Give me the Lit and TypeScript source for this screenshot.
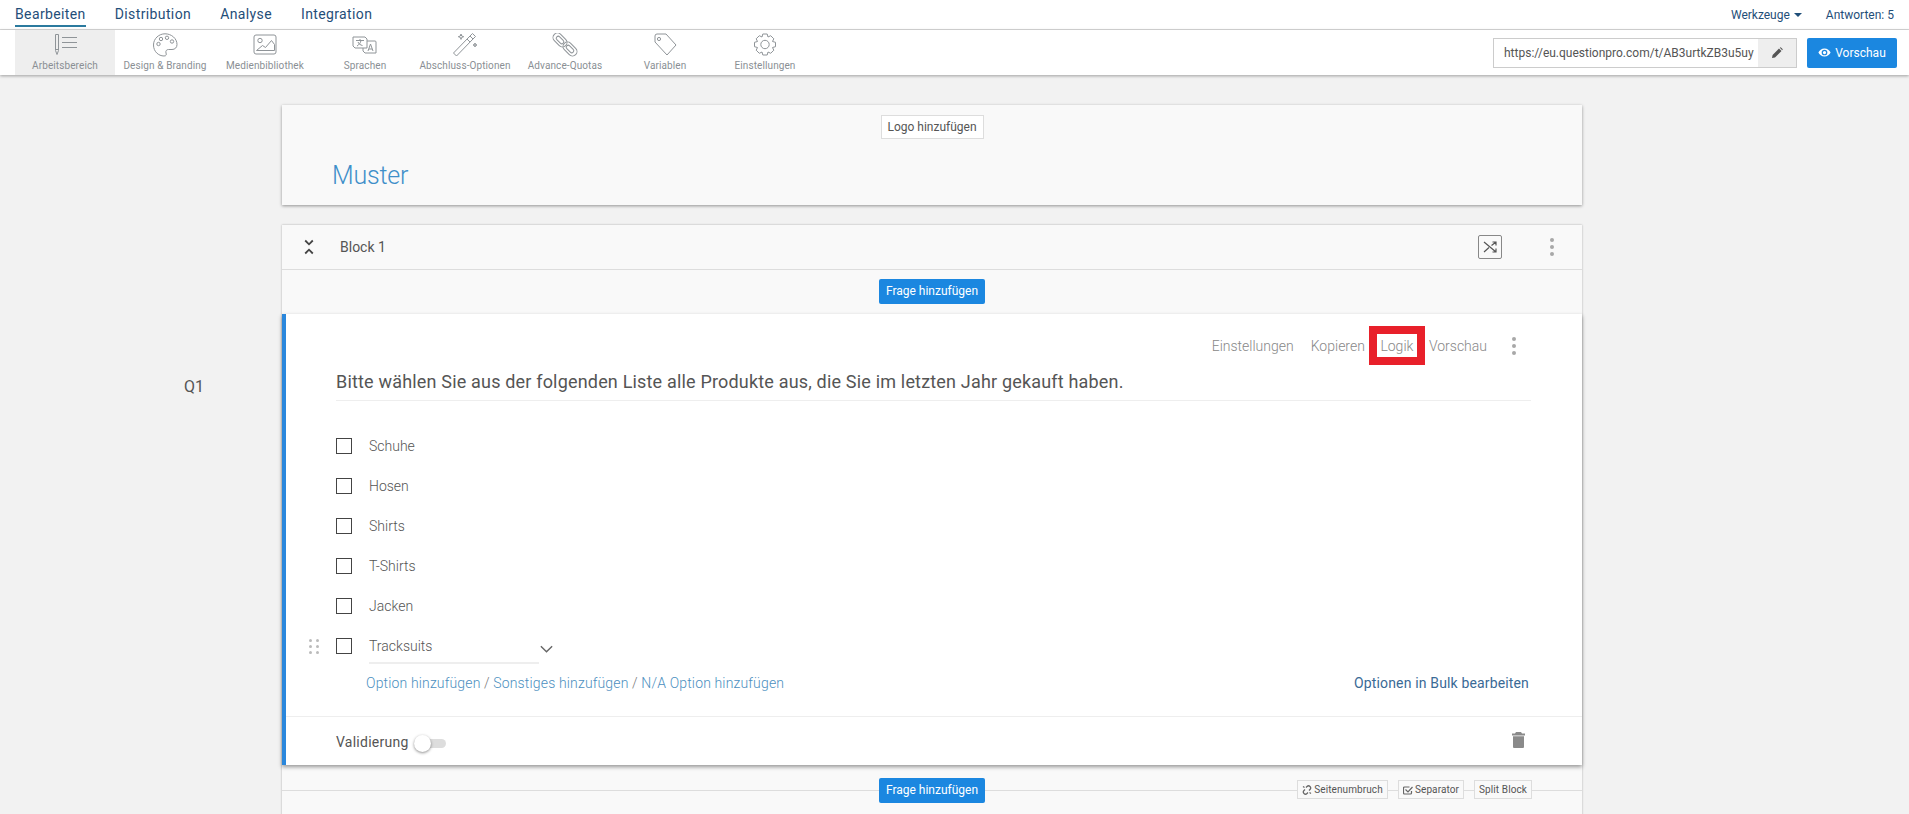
import { LitElement, html, css, svg } from "lit";
import { customElement } from "lit/decorators.js";

const tabs: [string, any][] = [
  ["Arbeitsbereich", svg`<path d="M6.500 1.500h3v16l-1.500 4-1.500-4z M6.500 16.500h3"/><path d="M13 4.500h15M13 9.500h15M13 14.500h15"/>`],
  ["Design & Branding", svg`<path d="M16 .8C10 .8 4.500 5.500 4.500 12c0 6.500 5 11 10.500 11 2.500 0 2.500-1.500 2-3-.6-2 .5-3.500 2.500-3.500h3.500c3 0 5-2 5-5C28 5.500 22.500.8 16 .8z"/><circle cx="9.500" cy="11" r="1.700"/><circle cx="12" cy="6" r="1.700"/><circle cx="18" cy="4.800" r="1.700"/><circle cx="23" cy="8.500" r="1.700"/>`],
  ["Medienbibliothek", svg`<rect x="5" y="2" width="22" height="19" rx="2"/><circle cx="11" cy="7.500" r="2.200"/><path d="M7.500 17.500l6-5 3 2 6-7 3 4v6z"/>`],
  ["Sprachen", svg`<path d="M4 4h12l2 2v9H6l-2-2z"/><path d="M18 8h8a1 1 0 0 1 1 1v11H16l-2-2v-3"/><path d="M7 7.500h8M11 6v1.500M8 13c2-1 3.500-3 4-5.500M9 9c.8 2 2.300 3 4.500 3.500"/><path d="M19 18l2.500-7 2.500 7M20 16h3"/>`],
  ["Abschluss-Optionen", svg`<path d="M4.500 20l3 3L24 6l-3-3z"/><path d="M18 6l3 3"/><path d="M21 3l2.500-2.500 3 3L24 6"/><path d="M12 1l.7 2 2 .7-2 .7-.7 2-.7-2-2-.7 2-.7zM26 10l.5 1.500 1.500.5-1.500.5-.5 1.500-.5-1.500-1.500-.5 1.500-.5z"/>`],
  ["Advance-Quotas", svg`<g transform="rotate(45 11 7)"><rect x="3" y="2.500" width="16" height="9" rx="4.500"/><rect x="6.500" y="5" width="9" height="4" rx="2"/></g><g transform="rotate(45 21 16)"><rect x="13" y="11.500" width="16" height="9" rx="4.500"/><rect x="16.500" y="14" width="9" height="4" rx="2"/></g>`],
  ["Variablen", svg`<path d="M6 3a2 2 0 0 1 2-2h9l10 11-9 10L6 9z"/><circle cx="10" cy="6" r="1.600"/>`],
  ["Einstellungen", svg`<circle cx="16" cy="11.500" r="4.200"/><path d="M13.800 1h4.400l.8 3 2.700-1.300 3.100 3.100-1.300 2.700 3 .8v4.400l-3 .8 1.300 2.700-3.100 3.100-2.700-1.300-.8 3h-4.400l-.8-3-2.700 1.300-3.100-3.100 1.300-2.700-3-.8V9.300l3-.8-1.300-2.700 3.100-3.100L13 4z"/>`],
];

const options = ["Schuhe", "Hosen", "Shirts", "T-Shirts", "Jacken", "Tracksuits"];

@customElement("app-root")
export class AppRoot extends LitElement {
  static styles = css`
    :host { display: block; height: 814px; overflow: hidden; background: #f2f2f2; font-family: "Roboto", "Noto Sans", sans-serif; color: #555; }
    .nav { height: 29px; background: #fff; border-bottom: 1px solid #d9d9d9; display: flex; align-items: center; justify-content: space-between; padding: 0 15px; }
    .links { display: flex; gap: 29px; height: 100%; }
    .links a { color: #1f4e79; font-size: 14px; letter-spacing: .38px; line-height: 28px; height: 26px; }
    .links a.on { border-bottom: 2px solid #2b7a9e; height: 25px; }
    .right { display: flex; gap: 24px; font-size: 12px; color: #1f4e79; }
    .caret { display: inline-block; border: 4px solid transparent; border-top-color: #1f4e79; border-bottom: 0; margin-left: 4px; vertical-align: 2px; }
    .bar { height: 45px; background: #fff; box-shadow: 0 1px 3px rgba(0,0,0,.35); display: flex; padding-left: 15px; position: relative; }
    .tab { width: 100px; display: flex; flex-direction: column; align-items: center; box-sizing: border-box; padding-top: 3px; font-size: 10px; letter-spacing: .1px; color: #8a8f94; white-space: nowrap; }
    .tab.on { background: #eee; }
    .tab svg { width: 32px; height: 26px; fill: none; stroke: #8f9498; stroke-width: 1; display: block; }
    .tab span { line-height: 12px; margin-top: 1px; }
    .tools { margin-left: auto; display: flex; align-items: center; gap: 10px; padding-right: 12px; }
    .url { width: 304px; height: 30px; box-sizing: border-box; border: 1px solid #ccc; display: flex; font-size: 12px; color: #555; background: #fff; }
    .url span { flex: 1; line-height: 28px; padding-left: 10px; overflow: hidden; white-space: nowrap; }
    .url i { width: 38px; background: #eee; display: flex; align-items: center; justify-content: center; }
    .url svg { width: 12px; height: 12px; fill: #555; }
    .btn { background: #1b87e0; color: #fff; border-radius: 2px; }
    .prev { width: 90px; height: 30px; font-size: 12px; display: flex; align-items: center; justify-content: center; gap: 4px; }
    .prev svg { width: 13px; height: 13px; fill: #fff; }
    .main { display: flex; flex-direction: column; width: 1300px; margin-left: 282px; position: relative; }
    .head { height: 100px; margin-top: 30px; background: #f9f9f9; box-shadow: 0 1px 3px rgba(0,0,0,.4); display: flex; flex-direction: column; align-items: center; }
    .logo { margin-top: 10px; width: 103px; height: 24px; box-sizing: border-box; background: #fff; border: 1px solid #ddd; font-size: 12px; color: #555; text-align: center; line-height: 22px; white-space: nowrap; }
    .title { align-self: flex-start; margin: 22px 0 0 50px; font-size: 25px; letter-spacing: -.2px; font-weight: 300; line-height: 30px; color: #3f8fc9; }
    .block { margin-top: 20px; background: #f9f9f9; box-shadow: 0 0 2px rgba(0,0,0,.3); }
    .bh { height: 45px; box-sizing: border-box; border-bottom: 1px solid #ddd; display: flex; align-items: center; padding-left: 21px; font-size: 14px; color: #555; }
    .bh .col { width: 12px; height: 16px; margin-right: 25px; }
    .bh .col svg, .sm svg { display: block; }
    .shuf { width: 24px; height: 24px; border: 1px solid #888; border-radius: 2px; box-sizing: border-box; margin-left: auto; display: flex; align-items: center; justify-content: center; }
    .dots { display: flex; flex-direction: column; gap: 3px; width: 4px; }
    .dots b { width: 4px; height: 4px; border-radius: 50%; background: #a8a8a8; }
    .bh .dots { margin: 0 28px 0 48px; }
    .add { height: 44px; box-sizing: border-box; padding-bottom: 2px; display: flex; align-items: center; justify-content: center; }
    .fh { width: 106px; height: 25px; font-size: 12px; text-align: center; line-height: 25px; white-space: nowrap; }
    .q { height: 451px; background: #fff; border-left: 4px solid #2a87dc; box-shadow: 0 2px 4px rgba(0,0,0,.4); box-sizing: border-box; display: flex; flex-direction: column; }
    .qa { height: 45px; margin-top: 9px; display: flex; align-items: center; justify-content: flex-end; padding-right: 66px; font-size: 14px; font-weight: 300; color: #888; }
    .qa span { white-space: nowrap; }
    .qa .lg { width: 56px; height: 39px; box-sizing: border-box; border: 8px solid #e8202a; display: flex; align-items: center; justify-content: center; margin: 0 4px; }
    .qa .dots { margin-left: 25px; }
    .qa .first { margin-right: 17px; }
    .qt { margin: 0 51px 0 50px; padding-top: 1px; height: 33px; border-bottom: 1px solid #eee; font-size: 18px; letter-spacing: .18px; line-height: 26px; color: #555; white-space: nowrap; box-sizing: border-box; }
    .opts { margin: 25px 0 0 50px; position: relative; }
    .opt { height: 40px; display: flex; align-items: center; font-size: 14px; font-weight: 300; color: #555; position: relative; }
    .cb { width: 16px; height: 16px; border: 1px solid #444; box-sizing: border-box; margin-right: 17px; }
    .opt.last span { width: 170px; height: 36px; line-height: 36px; border-bottom: 2px solid #eee; box-sizing: border-box; }
    .grip { position: absolute; left: -27px; top: 13px; display: grid; grid-template-columns: 3px 3px; gap: 3px 4px; }
    .grip b { width: 3px; height: 3px; border-radius: 50%; background: #bbb; }
    .chev { width: 15px; height: 10px; margin-top: 6px; }
    .links2 { display: flex; justify-content: space-between; margin: 7px 53px 0 80px; font-size: 14px; letter-spacing: .15px; font-weight: 300; line-height: 20px; color: #777; }
    .links2 a { color: #4c8fc0; }
    .links2 a.bulk { color: #3a6a96; font-weight: 400; }
    .val { margin-top: auto; height: 49px; box-sizing: border-box; border-top: 1px solid #eee; display: flex; align-items: center; padding: 1px 57px 0 50px; font-size: 14px; letter-spacing: .25px; color: #555; }
    .tg { width: 32px; height: 9px; border-radius: 5px; background: #ddd; margin-left: 5px; position: relative; margin-top: 3px; }
    .tg::after { content: ""; position: absolute; left: 0; top: -4px; width: 17px; height: 17px; border-radius: 50%; background: #fff; box-shadow: 0 1px 3px rgba(0,0,0,.45); }
    .trash { margin-left: auto; width: 13px; height: 16px; fill: #8a8a8a; margin-top: -4px; }
    .foot { height: 60px; position: relative; }
    .foot::before { content: ""; position: absolute; left: 0; right: 0; top: 25px; border-top: 1px solid #ddd; }
    .foot .fh { position: absolute; left: 597px; top: 13px; }
    .sm { position: absolute; top: 15px; height: 19px; box-sizing: border-box; background: #f9f9f9; border: 1px solid #ddd; font-size: 10px; letter-spacing: .1px; line-height: 17px; color: #555; display: flex; align-items: center; justify-content: center; gap: 2px; white-space: nowrap; }
    .sm svg { width: 10px; height: 10px; fill: none; stroke: #666; stroke-width: 1.200; }
    .q1 { position: absolute; left: -98px; top: 302px; font-size: 16px; color: #555; }
  `;

  render() {
    return html`
      <div class="nav">
        <div class="links"><a class="on">Bearbeiten</a><a>Distribution</a><a>Analyse</a><a>Integration</a></div>
        <div class="right"><span>Werkzeuge<i class="caret"></i></span><span>Antworten: 5</span></div>
      </div>
      <div class="bar">
        ${tabs.map(([t, ic], i) => html`<div class="tab ${i === 0 ? "on" : ""}"><svg viewBox="0 0 32 26">${ic}</svg><span>${t}</span></div>`)}
        <div class="tools">
          <div class="url"><span>https://eu.questionpro.com/t/AB3urtkZB3u5uy</span><i><svg viewBox="0 0 12 12"><path d="M1 11l.6-3L8 1.500 10.500 4 4 10.400zM8.800.8l.9-.6 2.100 2.100-.6.9z"/></svg></i></div>
          <div class="btn prev"><svg viewBox="0 0 16 16"><path d="M8 3C4.500 3 1.700 5.500.5 8c1.200 2.500 4 5 7.500 5s6.300-2.500 7.500-5C14.300 5.500 11.500 3 8 3zm0 8.500A3.500 3.500 0 1 1 8 4.500a3.500 3.500 0 0 1 0 7zM8 6a2 2 0 1 0 0 4 2 2 0 0 0 0-4z"/></svg>Vorschau</div>
        </div>
      </div>
      <div class="main">
        <div class="q1">Q1</div>
        <div class="head"><div class="logo">Logo hinzufügen</div><div class="title">Muster</div></div>
        <div class="block">
          <div class="bh">
            <div class="col"><svg width="12" height="16" viewBox="0 0 12 16" fill="none" stroke="#444" stroke-width="1.800"><path d="M2.200 1.500L6 5.300l3.800-3.800M2.200 14.500L6 10.700l3.800 3.800"/></svg></div>
            Block 1
            <div class="shuf"><svg width="16" height="16" viewBox="0 0 16 16" fill="none" stroke="#555" stroke-width="1.200"><path d="M2 3l12 10M2 13l5-4.500M9.500 6.500L14 3M10.500 3H14v3.500M10.500 13H14V9.500"/></svg></div>
            <div class="dots"><b></b><b></b><b></b></div>
          </div>
          <div class="add"><div class="btn fh">Frage hinzufügen</div></div>
          <div class="q">
            <div class="qa">
              <span class="first">Einstellungen</span><span>Kopieren</span>
              <div class="lg"><span>Logik</span></div>
              <span>Vorschau</span>
              <div class="dots"><b></b><b></b><b></b></div>
            </div>
            <div class="qt">Bitte wählen Sie aus der folgenden Liste alle Produkte aus, die Sie im letzten Jahr gekauft haben.</div>
            <div class="opts">
              ${options.map((o, i) => i < 5
                ? html`<div class="opt"><i class="cb"></i><span>${o}</span></div>`
                : html`<div class="opt last"><div class="grip"><b></b><b></b><b></b><b></b><b></b><b></b></div><i class="cb"></i><span>${o}</span><svg class="chev" viewBox="0 0 16 10" fill="none" stroke="#666" stroke-width="1.500"><path d="M2 2l6 6 6-6"/></svg></div>`)}
            </div>
            <div class="links2"><div><a>Option hinzufügen</a> / <a>Sonstiges hinzufügen</a> / <a>N/A Option hinzufügen</a></div><a class="bulk">Optionen in Bulk bearbeiten</a></div>
            <div class="val">Validierung<div class="tg"></div><svg class="trash" viewBox="0 0 13 16"><path d="M4 0h5l1 1.500h3V3.500H0V1.500h3zM1 4.200h11V15a1 1 0 0 1-1 1H2a1 1 0 0 1-1-1z"/></svg></div>
          </div>
          <div class="foot">
            <div class="btn fh">Frage hinzufügen</div>
            <div class="sm" style="left:1015px;width:91px"><svg viewBox="0 0 10 10"><path d="M4 2.500L5 1.500a2 2 0 0 1 3 3L7 5.500M6 7.500L5 8.500a2 2 0 0 1-3-3L3 4.500M1 1.500l1.500 1M9 8.500l-1.500-1"/></svg>Seitenumbruch</div>
            <div class="sm" style="left:1116px;width:66px"><svg viewBox="0 0 10 10"><path d="M8.500 6v2a1 1 0 0 1-1 1h-6a1 1 0 0 1-1-1V3a1 1 0 0 1 1-1h5"/><path d="M2.500 4.500L5 7l4.500-5"/></svg>Separator</div>
            <div class="sm" style="left:1192px;width:58px">Split Block</div>
          </div>
        </div>
      </div>
    `;
  }
}
